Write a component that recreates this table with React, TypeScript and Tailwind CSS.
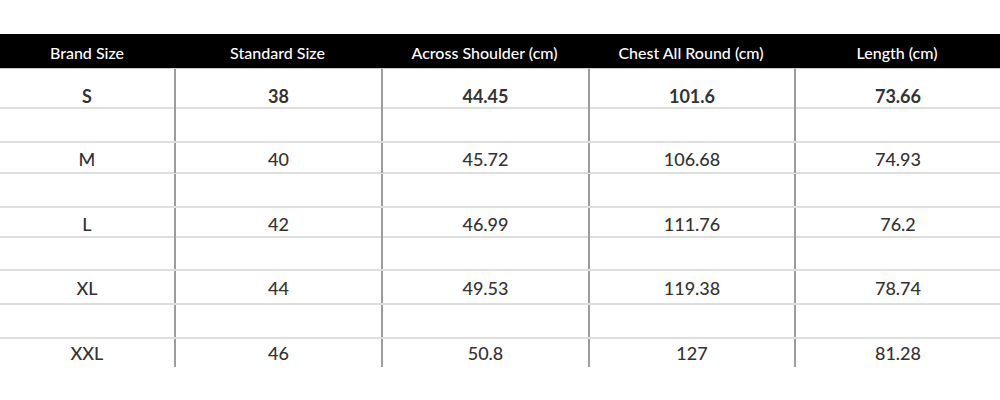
import * as React from 'react';

const columns = ['Brand Size', 'Standard Size', 'Across Shoulder (cm)', 'Chest All Round (cm)', 'Length (cm)'];

type Row = {
  cells?: string[];
  height: string;
  pad?: string;
  bold?: boolean;
  last?: boolean;
};

const rows: Row[] = [
  { cells: ['S', '38', '44.45', '101.6', '73.66'], height: 'h-[40px]', pad: 'pt-[14px]', bold: true },
  { height: 'h-[34px]' },
  { cells: ['M', '40', '45.72', '106.68', '74.93'], height: 'h-[31px]', pad: 'pt-[3px]' },
  { height: 'h-[34px]' },
  { cells: ['L', '42', '46.99', '111.76', '76.2'], height: 'h-[30px]', pad: 'pt-[3px]' },
  { height: 'h-[33px]' },
  { cells: ['XL', '44', '49.53', '119.38', '78.74'], height: 'h-[34px]', pad: 'pt-[2px]' },
  { height: 'h-[34px]' },
  { cells: ['XXL', '46', '50.8', '127', '81.28'], height: 'h-[25px]', pad: 'pt-[1px]', last: true },
];

const grid = 'grid grid-cols-[174px_207px_207px_206px_206px]';

export default function App() {
  return (
    <div className="w-[1000px] h-[400px] bg-white overflow-hidden pt-[34px] font-['Lato','Liberation_Sans',sans-serif]">
      <div className={`${grid} h-[35px] bg-black border-b border-[#c8c8c8]`}>
        {columns.map((c) => (
          <div
            key={c}
            className="flex items-center justify-center pt-[3px] text-[16px] font-medium text-white"
          >
            {c}
          </div>
        ))}
      </div>
      {rows.map((r, i) => (
        <div
          key={i}
          className={`${grid} ${r.height} ${r.last ? '' : 'border-b-2 border-[#dedede]'}`}
        >
          {[0, 1, 2, 3, 4].map((j) => (
            <div
              key={j}
              className={`flex items-center justify-center ${r.pad ?? ''} text-[18px] text-[#333333] ${
                r.bold ? 'font-bold' : 'font-medium'
              } ${j > 0 ? 'border-l-2 border-[#9c9c9c]' : ''}`}
            >
              {r.cells ? r.cells[j] : ''}
            </div>
          ))}
        </div>
      ))}
    </div>
  );
}
